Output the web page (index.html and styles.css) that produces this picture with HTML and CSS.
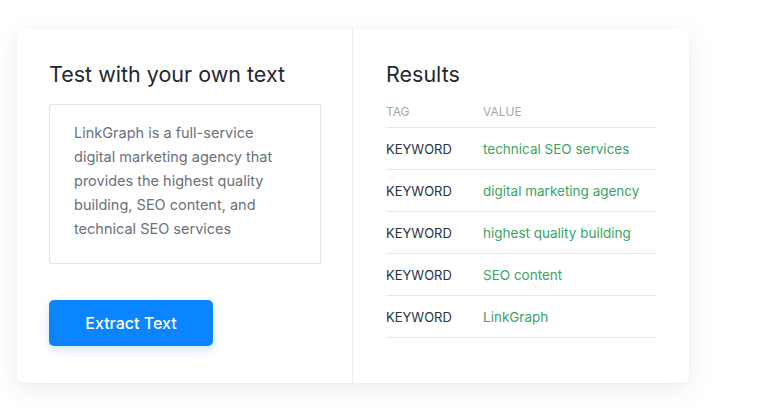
FILE: index.html
```html
<!DOCTYPE html>
<html lang="en">
<head>
<meta charset="utf-8">
<title>Test with your own text</title>
<link rel="stylesheet" href="styles.css">
</head>
<body>
<div class="page">
  <div class="card">
    <section class="col col-left">
      <h2 class="title">Test with your own text</h2>
      <div class="textbox">LinkGraph is a full-service digital marketing agency that provides the highest quality building, SEO content, and technical SEO services</div>
      <button class="btn" type="button">Extract Text</button>
    </section>
    <section class="col col-right">
      <h2 class="title">Results</h2>
      <div class="table">
        <div class="row head"><span class="tag">TAG</span><span class="val">VALUE</span></div>
        <div class="row"><span class="tag">KEYWORD</span><span class="val">technical SEO services</span></div>
        <div class="row"><span class="tag">KEYWORD</span><span class="val">digital marketing agency</span></div>
        <div class="row"><span class="tag">KEYWORD</span><span class="val">highest quality building</span></div>
        <div class="row"><span class="tag">KEYWORD</span><span class="val">SEO content</span></div>
        <div class="row"><span class="tag">KEYWORD</span><span class="val">LinkGraph</span></div>
      </div>
    </section>
  </div>
</div>
</body>
</html>
```
FILE: styles.css
```css
* { box-sizing: border-box; }
html, body { margin: 0; padding: 0; }
body {
  background: #ffffff;
  font-family: "Inter", "Liberation Sans", sans-serif;
  width: 777px;
  height: 412px;
  overflow: hidden;
}
.page {
  padding: 29px 0 0 17px;
}
.card {
  width: 672px;
  height: 354px;
  background: #fff;
  border-radius: 6px;
  box-shadow: 0 6px 28px rgba(20, 30, 60, 0.08), 0 1px 3px rgba(20, 30, 60, 0.04);
  display: flex;
}
.col {
  width: 336px;
  padding: 32px 32px 0 32px;
}
.col-left {
  border-right: 1px solid #e8eaee;
}
.col-right { padding-left: 33px; }
.title {
  margin: 0;
  font-size: 21.5px;
  line-height: 26px;
  font-weight: 400;
  color: #1f2933;
}
.textbox {
  margin-top: 17px;
  width: 272px;
  height: 160px;
  border: 1px solid #e3e5e8;
  border-radius: 2px;
  padding: 16px 24px;
  font-size: 14.5px;
  line-height: 24px;
  color: #6b717b;
}
.btn {
  margin-top: 36px;
  width: 164px;
  height: 46px;
  border: none;
  border-radius: 5px;
  background: #0a84ff;
  color: #fff;
  font-family: inherit;
  font-size: 16px;
  font-weight: 500;
  box-shadow: 0 4px 10px rgba(10, 132, 255, 0.2);
}
.table {
  margin-top: 17px;
  width: 271px;
}
.row {
  display: flex;
  align-items: center;
  height: 42px;
  border-bottom: 1px solid #e6e8eb;
  font-size: 13.5px;
}
.row.head {
  height: 24px;
  align-items: flex-start;
  font-size: 12px;
  color: #a3a8ae;
}
.tag { width: 97px; color: #2a323c; font-size: 13px; }
.head .tag { color: #a3a8ae; font-size: 12px; }
.val { color: #3aa564; }
.head .val { color: #a3a8ae; }
```
